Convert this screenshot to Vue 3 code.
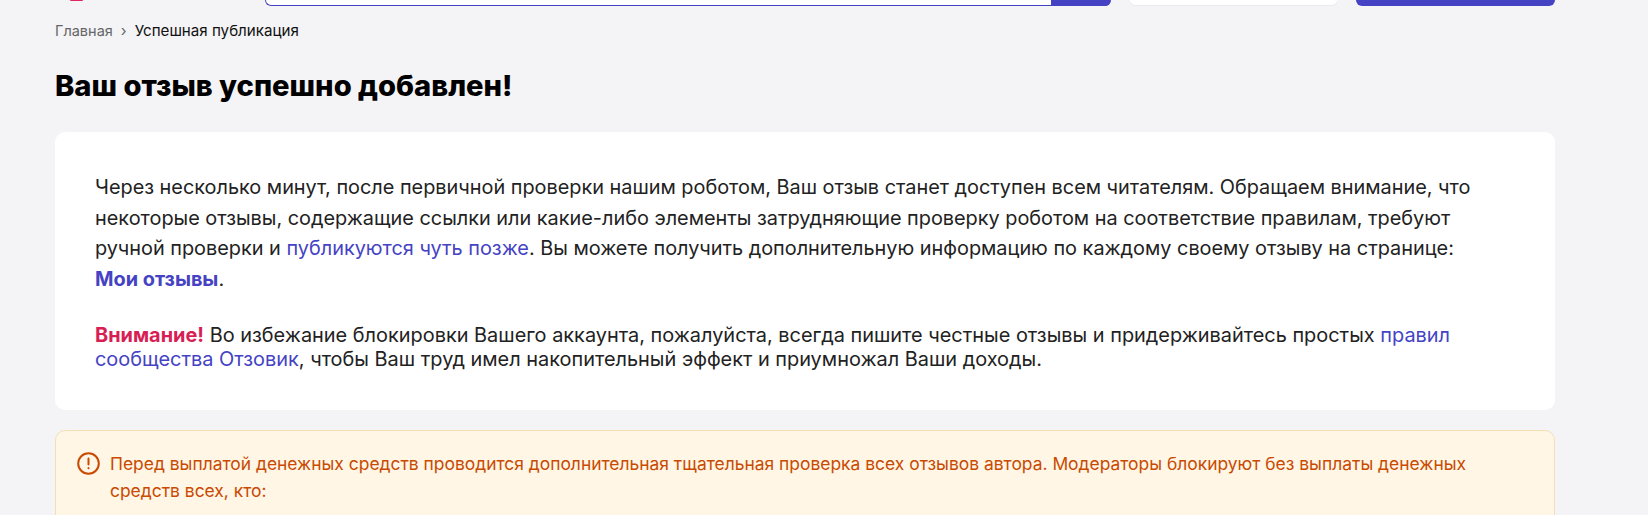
<script setup>
</script>

<template>
  <div class="page">
    <div class="top">
      <div class="logo"></div>
      <div class="search"><div class="search-btn"></div></div>
      <div class="top-white"></div>
      <div class="top-btn"></div>
    </div>
    <div class="crumbs"><span class="crumb-link">Главная</span><span class="sep">›</span><span>Успешная публикация</span></div>
    <h1>Ваш отзыв успешно добавлен!</h1>
    <div class="card">
      <p class="lead">Через несколько минут, после первичной проверки нашим роботом, Ваш отзыв станет доступен всем читателям. Обращаем внимание, что некоторые отзывы, содержащие ссылки или какие-либо элементы затрудняющие проверку роботом на соответствие правилам, требуют ручной проверки и <a>публикуются чуть позже</a>. Вы можете получить дополнительную информацию по каждому своему отзыву на странице: <a class="strong">Мои отзывы</a>.</p>
      <p class="warn"><b>Внимание!</b> Во избежание блокировки Вашего аккаунта, пожалуйста, всегда пишите честные отзывы и придерживайтесь простых <a>правил сообщества Отзовик</a>, чтобы Ваш труд имел накопительный эффект и приумножал Ваши доходы.</p>
    </div>
    <div class="notice">
      <svg class="notice-icon" width="23" height="23" viewBox="0 0 23 23" fill="none" stroke="#c94a00" stroke-width="2" stroke-linecap="round">
        <circle cx="11.5" cy="11.5" r="10.3"/>
        <path d="M11.5 6.5v6M11.5 16v.3"/>
      </svg>
      <div class="notice-text">Перед выплатой денежных средств проводится дополнительная тщательная проверка всех отзывов автора. Модераторы блокируют без выплаты денежных средств всех, кто:</div>
    </div>
  </div>
</template>

<style>
html, body { background: #f4f4f6; overflow: hidden; }
</style>

<style scoped>
.page {
  width: 1500px;
  margin-left: 55px;
  height: 515px;
  overflow: hidden;
  font-family: Inter, "Noto Sans", sans-serif;
  color: #222;
}
.top { display: flex; height: 6px; }
.logo { width: 13px; height: 1px; margin-left: 15px; background: #e0245e; border-radius: 0 0 6px 6px; }
.search {
  width: 846px;
  margin-left: 182px;
  box-sizing: border-box;
  background: #fff;
  border-bottom: 1px solid #4543c4;
  border-left: 1px solid #4543c4;
  border-radius: 0 0 8px 8px;
  display: flex;
  justify-content: flex-end;
}
.search-btn { width: 60px; background: #4543c4; margin-bottom: -1px; border-radius: 0 0 8px 0; }
.top-white { width: 207px; height: 5px; margin-left: 19px; background: #fff; border-radius: 0 0 8px 8px; box-shadow: 0 1px 1px #e9e9ee; }
.top-btn { width: 199px; margin-left: 19px; background: #4543c4; border-radius: 0 0 8px 8px; }
.crumbs { margin-top: 15px; font-size: 15.15px; line-height: 20px; color: #111; }
.crumb-link { color: #666; font-size: 14.5px; }
.sep { margin: 0 8px; color: #666; }
h1 { margin: 27px 0 0; font-size: 29.15px; line-height: 36px; font-weight: 800; color: #000; }
.card {
  box-sizing: border-box;
  margin-top: 28px;
  padding: 40px 70px 38.5px 40px;
  background: #fff;
  border-radius: 10px;
  font-size: 19.86px;
}
.lead { margin: 0 0 29px; line-height: 30.6px; }
.warn { margin: 0; line-height: 24px; font-size: 19.92px; }
a { color: #4543c4; }
a.strong { font-weight: 700; }
.warn b { color: #d81f55; font-weight: 700; }
.notice {
  box-sizing: border-box;
  margin-top: 20px;
  padding: 19px 60px 60px 21px;
  display: flex;
  gap: 10px;
  background: #fff6e6;
  border: 1px solid #f4dfb5;
  border-radius: 10px;
  color: #c94a00;
  font-size: 17.43px;
  line-height: 27px;
}
.notice-icon { flex: none; margin-top: 2px; }
</style>
